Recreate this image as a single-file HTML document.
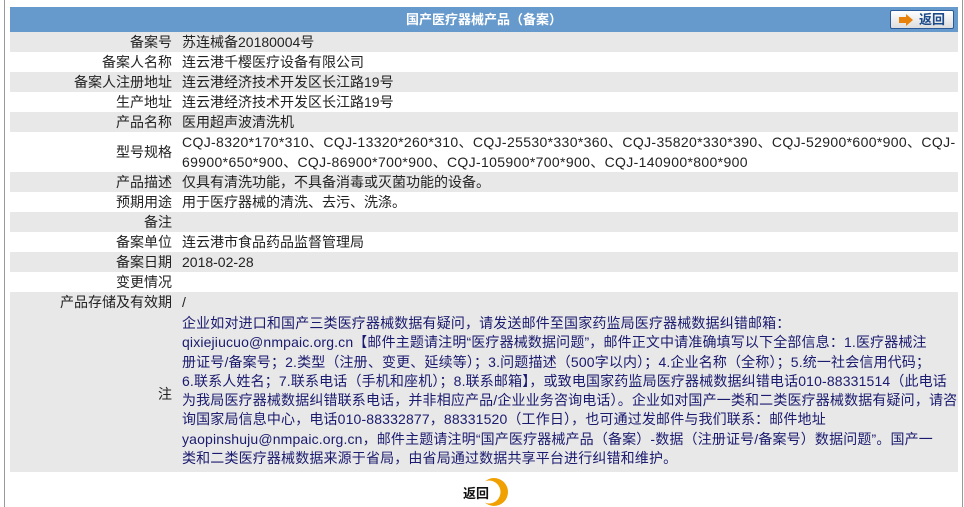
<!DOCTYPE html>
<html><head><meta charset="utf-8"><style>
*{margin:0;padding:0;box-sizing:border-box}
body{width:964px;height:507px;background:#fff;position:relative;overflow:hidden;font-family:"Liberation Sans","Noto Sans CJK SC",sans-serif;font-size:14px;color:#222}
.vl{position:absolute;top:0;bottom:0;width:1px;background:#999}
.hd{position:absolute;left:10px;top:7px;width:948px;height:25px;background:#6699cc;color:#fff;font-weight:bold;text-align:center;line-height:25px;font-size:13px}
.btn{position:absolute;right:4px;top:3px;width:64px;height:19px;border:1px solid #2a5a9a;border-radius:2px;background:linear-gradient(#fff,#ddd);color:#1a4a8a;font-size:13px;line-height:17px;text-align:left;padding-left:28px}
.btn svg{position:absolute;left:8px;top:3px}
.r{position:absolute;left:10px;width:948px;height:20px;line-height:20px}
.g{background:#e8e8e8}
.l{position:absolute;left:0;width:162px;text-align:right}
.v{position:absolute;left:172px;right:0;white-space:nowrap}
.cq{letter-spacing:0.35px}
.note{color:#1a1a6e;white-space:nowrap;line-height:19.3px;top:2px;letter-spacing:0.15px}
</style></head><body>
<div class="vl" style="left:4px"></div><div class="vl" style="left:962px"></div>
<div class="hd">国产医疗器械产品（备案）<div class="btn"><svg width="14" height="12"><path d="M0 3h7V0l7 6-7 6V9H0z" fill="#e8820a"/></svg>返回</div></div>
<div class="r g" style="top:32px"><span class="l">备案号</span><span class="v">苏连械备20180004号</span></div>
<div class="r" style="top:52px"><span class="l">备案人名称</span><span class="v">连云港千樱医疗设备有限公司</span></div>
<div class="r g" style="top:72px"><span class="l">备案人注册地址</span><span class="v">连云港经济技术开发区长江路19号</span></div>
<div class="r" style="top:92px"><span class="l">生产地址</span><span class="v">连云港经济技术开发区长江路19号</span></div>
<div class="r g" style="top:112px"><span class="l">产品名称</span><span class="v">医用超声波清洗机</span></div>
<div class="r" style="top:132px;height:40px"><span class="l" style="top:10px">型号规格</span><span class="v cq">CQJ-8320*170*310、CQJ-13320*260*310、CQJ-25530*330*360、CQJ-35820*330*390、CQJ-52900*600*900、CQJ-<br>69900*650*900、CQJ-86900*700*900、CQJ-105900*700*900、CQJ-140900*800*900</span></div>
<div class="r g" style="top:172px"><span class="l">产品描述</span><span class="v">仅具有清洗功能，不具备消毒或灭菌功能的设备。</span></div>
<div class="r" style="top:192px"><span class="l">预期用途</span><span class="v">用于医疗器械的清洗、去污、洗涤。</span></div>
<div class="r g" style="top:212px"><span class="l">备注</span><span class="v"></span></div>
<div class="r" style="top:232px"><span class="l">备案单位</span><span class="v">连云港市食品药品监督管理局</span></div>
<div class="r g" style="top:252px"><span class="l">备案日期</span><span class="v">2018-02-28</span></div>
<div class="r" style="top:272px"><span class="l">变更情况</span><span class="v"></span></div>
<div class="r g" style="top:292px"><span class="l">产品存储及有效期</span><span class="v">/</span></div>
<div class="r g" style="top:312px;height:160px"><span class="l" style="top:72px">注</span><span class="v note">企业如对进口和国产三类医疗器械数据有疑问，请发送邮件至国家药监局医疗器械数据纠错邮箱：<br>qixiejiucuo@nmpaic.org.cn【邮件主题请注明“医疗器械数据问题”，邮件正文中请准确填写以下全部信息：1.医疗器械注<br>册证号/备案号；2.类型（注册、变更、延续等）；3.问题描述（500字以内）；4.企业名称（全称）；5.统一社会信用代码；<br>6.联系人姓名；7.联系电话（手机和座机）；8.联系邮箱】，或致电国家药监局医疗器械数据纠错电话010-88331514（此电话<br>为我局医疗器械数据纠错联系电话，并非相应产品/企业业务咨询电话）。企业如对国产一类和二类医疗器械数据有疑问，请咨<br>询国家局信息中心，电话010-88332877，88331520（工作日），也可通过发邮件与我们联系：邮件地址<br>yaopinshuju@nmpaic.org.cn，邮件主题请注明“国产医疗器械产品（备案）-数据（注册证号/备案号）数据问题”。国产一<br>类和二类医疗器械数据来源于省局，由省局通过数据共享平台进行纠错和维护。</span></div>
<svg style="position:absolute;left:474px;top:477px" width="36" height="30"><circle cx="20" cy="15" r="14" fill="#f0a000"/><circle cx="15" cy="15" r="11.5" fill="#fff"/></svg>
<div style="position:absolute;left:463px;top:483px;font-weight:bold;font-size:13px;color:#111">返回</div>
</body></html>
